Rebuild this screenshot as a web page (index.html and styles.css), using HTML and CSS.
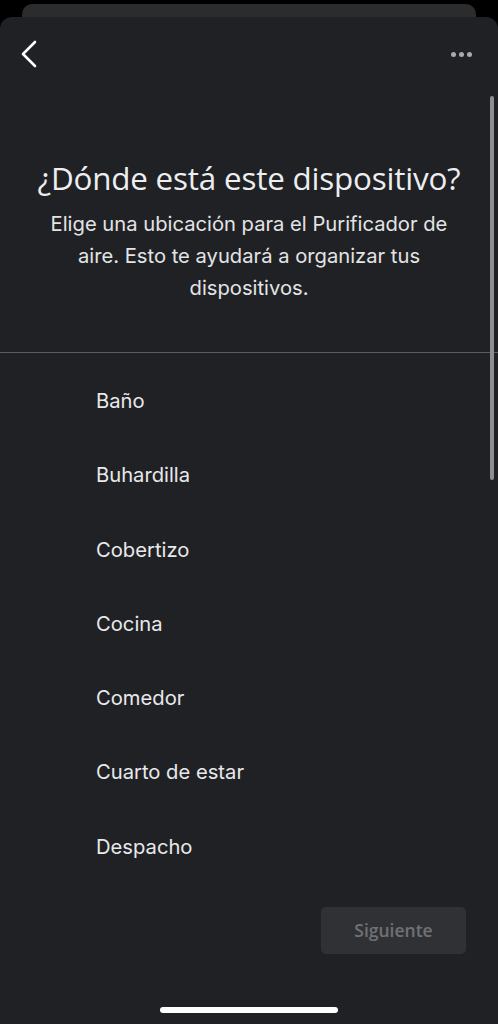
FILE: index.html
```html
<!DOCTYPE html>
<html>
<head>
<meta charset="UTF-8">
<link rel="stylesheet" href="styles.css">
</head>
<body>
	<div class="back_card"></div>
	<div class="sheet">
		<div class="topbar">
			<a href="javascript:;" class="btn_back">
				<svg width="18" height="28" viewBox="0 0 18 28"><path d="M15 2 L3 14 L15 26" fill="none" stroke="#fff" stroke-width="2.6" stroke-linecap="round" stroke-linejoin="round"/></svg>
			</a>
			<a href="javascript:;" class="btn_more"><i></i><i></i><i></i></a>
		</div>
		<div class="scrollbar"></div>

		<h1 class="title">¿Dónde está este dispositivo?</h1>
		<p class="desc">Elige una ubicación para el Purificador de aire. Esto te ayudará a organizar tus dispositivos.</p>

		<div class="divider"></div>

		<ul class="rooms">
			<li>Baño</li>
			<li>Buhardilla</li>
			<li>Cobertizo</li>
			<li>Cocina</li>
			<li>Comedor</li>
			<li>Cuarto de estar</li>
			<li>Despacho</li>
		</ul>

		<div class="footer">
			<a href="javascript:;" class="btn_next">Siguiente</a>
		</div>

		<div class="home_bar"></div>
	</div>
</body>
</html>
```
FILE: styles.css
```css
*{margin: 0;padding: 0;list-style: none;box-sizing: border-box;}
body{background: #000;width: 498px;height: 1024px;overflow: hidden;
	font-family: Inter, Roboto, "Noto Sans", sans-serif;color: #e8eaed;}
a{text-decoration: none;}

.back_card{height: 13px;margin: 4px 22px 0;background: #2b2c2e;
	border-radius: 10px 10px 0 0;}

.sheet{position: relative;height: 1007px;background: #202124;
	border-radius: 12px 12px 0 0;display: flex;flex-direction: column;}

.topbar{height: 74px;display: flex;align-items: center;justify-content: space-between;
	padding: 0 26px 0 20px;}
.btn_back{display: flex;width: 18px;height: 28px;}
.btn_more{display: flex;gap: 3px;}
.btn_more i{width: 5px;height: 5px;border-radius: 50%;background: #a9aaad;display: block;}

.scrollbar{position: absolute;right: 4px;top: 79px;width: 4px;height: 384px;
	background: #8d8e91;border-radius: 2px;}

.title{margin-top: 69px;font-family: "Open Sans", Roboto, sans-serif;font-weight: 400;
	font-size: 31.4px;line-height: 36px;text-align: center;color: #eceef0;letter-spacing: -0.2px;}
.desc{margin: 12px auto 0;width: 430px;font-size: 20.2px;line-height: 32px;
	text-align: center;color: #e3e4e6;}

.divider{margin-top: 48px;height: 1px;background: #5b5c5f;}

.rooms{padding-top: 11px;}
.rooms li{height: 74.3px;line-height: 74.3px;padding-left: 96px;font-size: 20.2px;color: #e8e9eb;}

.footer{display: flex;justify-content: flex-end;padding: 23px 32px 0 0;}
.btn_next{width: 145px;height: 47px;line-height: 47px;text-align: center;border-radius: 5px;
	background: #303134;color: #707174;font-family: "Open Sans", Roboto, sans-serif;font-weight: 600;font-size: 17.5px;}

.home_bar{position: absolute;left: 160px;bottom: 11px;width: 178px;height: 6px;
	border-radius: 3px;background: #fff;}
```
